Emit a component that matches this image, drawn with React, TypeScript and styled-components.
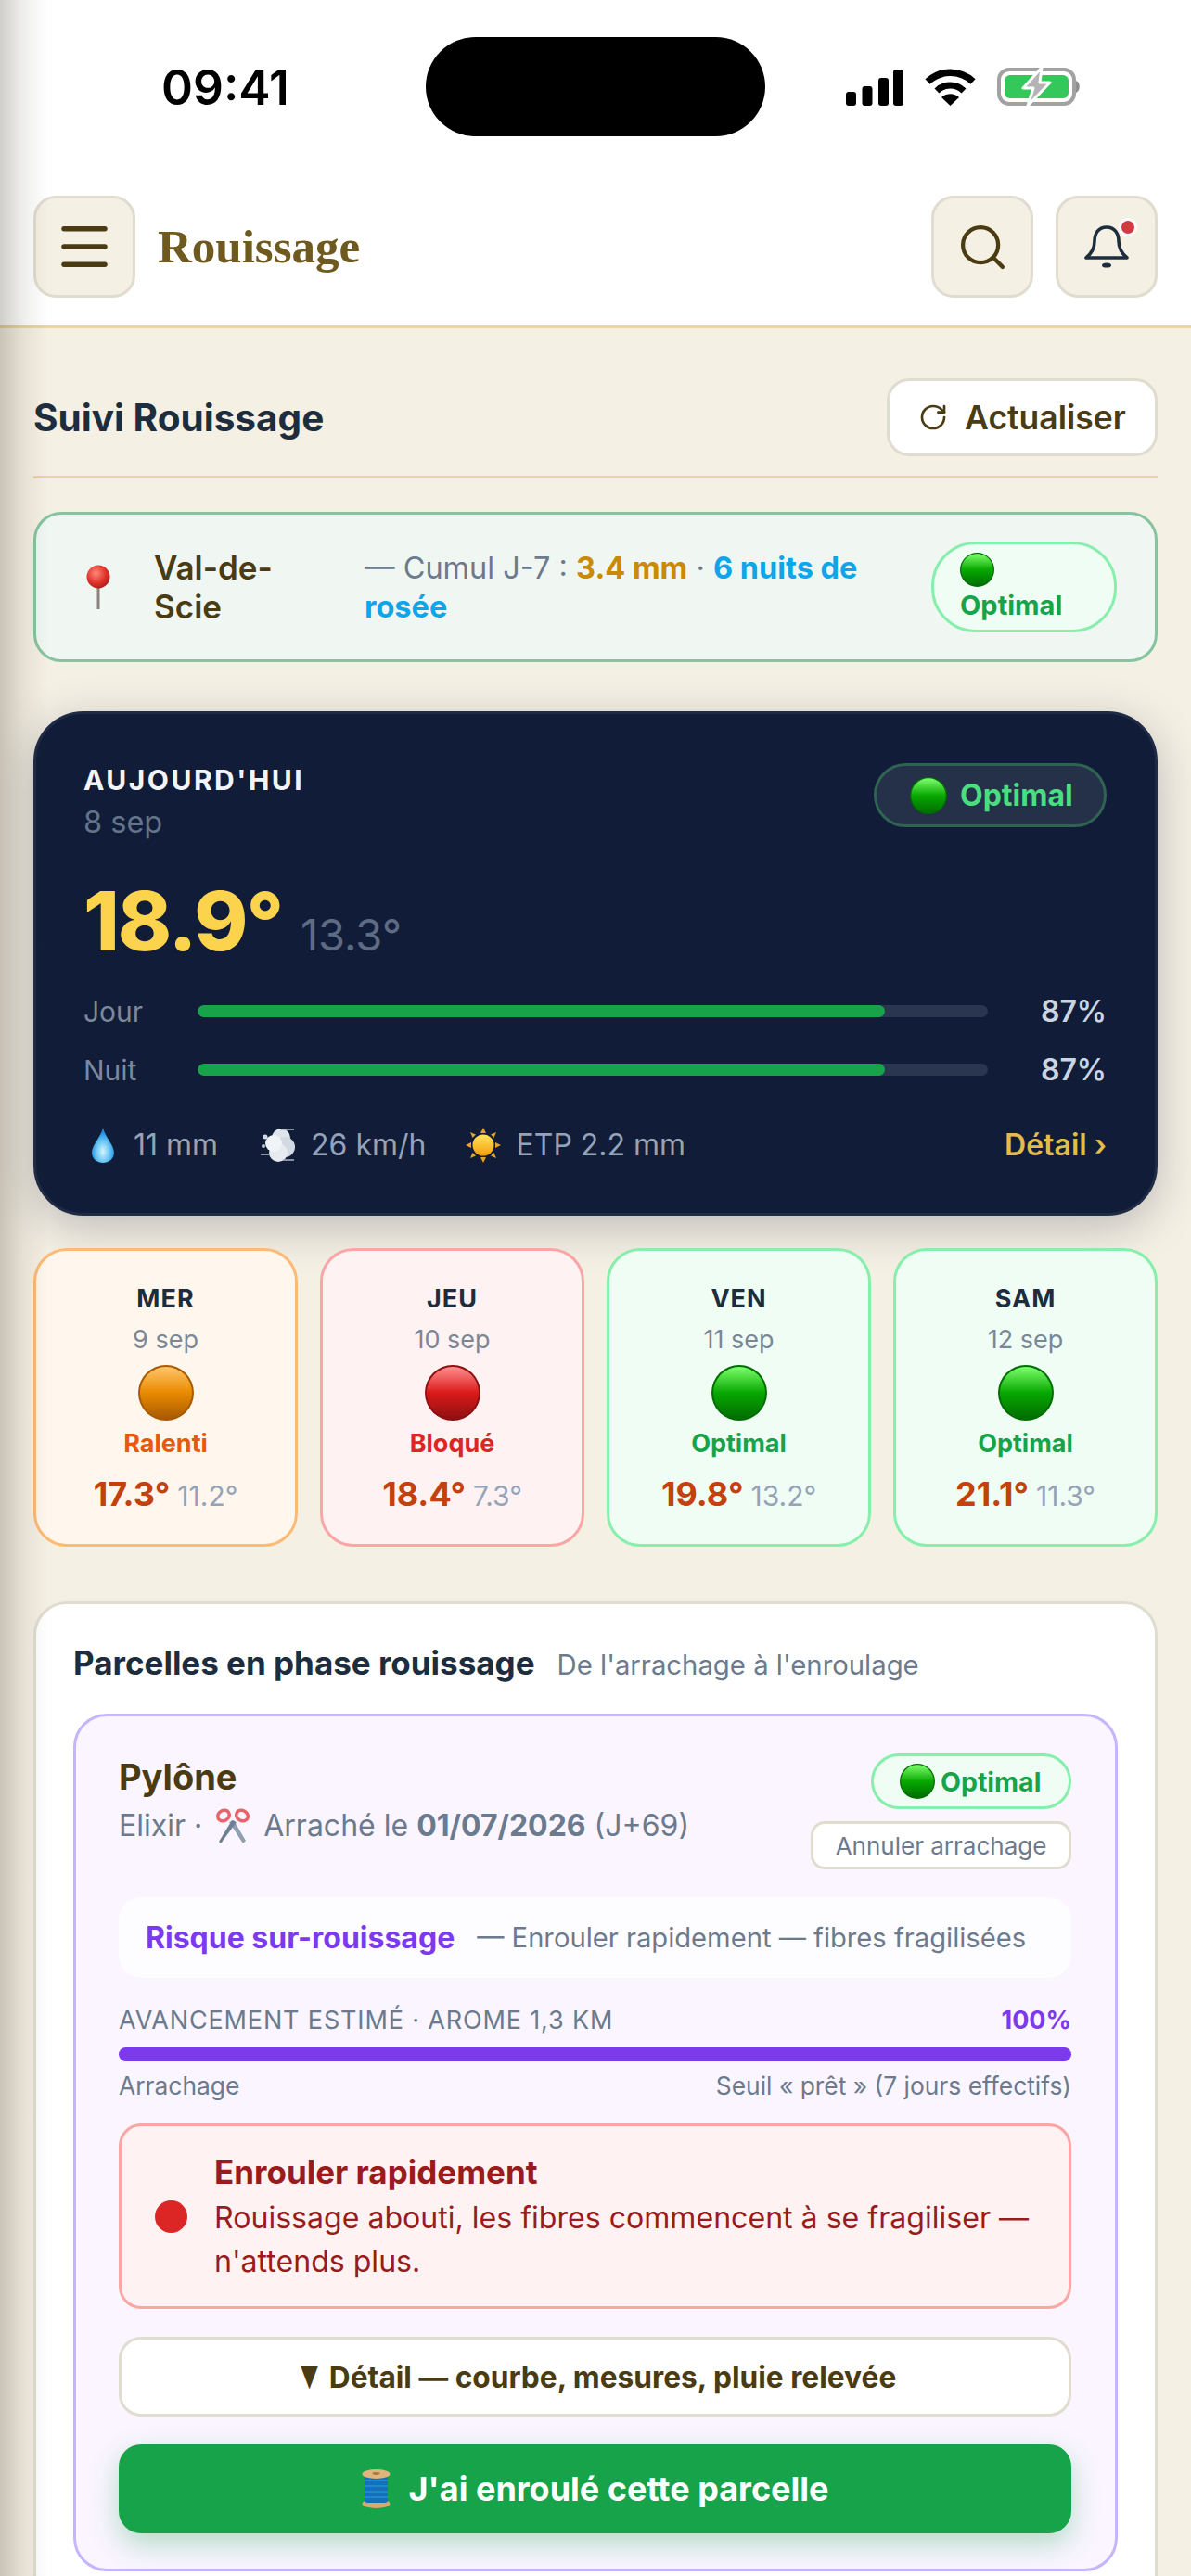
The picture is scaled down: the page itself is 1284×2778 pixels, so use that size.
import React from 'react';
import styled, { createGlobalStyle } from 'styled-components';
import { Menu, RotateCw, Search } from 'lucide-react';

const Global = createGlobalStyle`
  html, body { margin: 0; padding: 0; background: #f5f0e4; }
  * { box-sizing: border-box; }
  #root { width: 1284px; }
`;

const FONT = `Inter, "Noto Sans", sans-serif`;

const Screen = styled.div`
  position: relative;
  width: 1284px;
  height: 2778px;
  overflow: hidden;
  background: #f5f0e4;
  font-family: ${FONT};
  color: #1e2d3d;
`;

const SideShade = styled.div`
  position: absolute;
  left: 0;
  top: 0;
  bottom: 0;
  width: 52px;
  background: linear-gradient(90deg, rgba(60, 55, 40, 0.24), rgba(60, 55, 40, 0.08) 50%, rgba(60, 55, 40, 0));
  pointer-events: none;
  z-index: 5;
`;

const TopArea = styled.header`
  background: #fff;
  border-bottom: 3px solid #e8d5a0;
  height: 354px;
`;

const StatusBar = styled.div`
  height: 211px;
  position: relative;
  padding-left: 174px;
`;

const Clock = styled.div`
  font-size: 51.5px;
  font-weight: 600;
  color: #000;
  line-height: 52px;
  padding-top: 68px;
`;

const Island = styled.div`
  position: absolute;
  left: 459px;
  top: 40px;
  width: 366px;
  height: 107px;
  border-radius: 54px;
  background: #000;
`;

const StatusIcons = styled.div`
  position: absolute;
  left: 912px;
  top: 73px;
  display: flex;
  align-items: flex-end;
  gap: 23px;
`;

const NavRow = styled.div`
  display: flex;
  align-items: center;
  padding: 0 36px;
  gap: 24px;
`;

const SquareButton = styled.div`
  width: 110px;
  height: 110px;
  border-radius: 24px;
  background: #f5f0e4;
  border: 3px solid #e0dcd0;
  display: flex;
  align-items: center;
  justify-content: center;
  position: relative;
  flex: none;
`;

const Brand = styled.div`
  font-family: "Liberation Serif", serif;
  font-weight: 700;
  font-size: 51px;
  color: #6e5a1e;
  flex: 1;
`;

const Dot = styled.span`
  position: absolute;
  top: 21px;
  left: 65px;
  width: 20px;
  height: 20px;
  border-radius: 50%;
  background: #d13a40;
  border: 3px solid #fff;
`;

const Main = styled.main`
  padding: 54px 36px 0;
`;

const TitleRow = styled.div`
  display: flex;
  justify-content: space-between;
  align-items: center;
  padding-bottom: 21px;
  border-bottom: 3px solid #e8d5a0;
  margin-bottom: 36px;
`;

const PageTitle = styled.h1`
  margin: 0;
  font-size: 40.5px;
  font-weight: 700;
  color: #1e2d3d;
`;

const RefreshButton = styled.div`
  display: flex;
  align-items: center;
  gap: 18px;
  height: 84px;
  width: 292px;
  justify-content: center;
  background: #fff;
  border: 3px solid #e0dcd0;
  border-radius: 24px;
  font-size: 35.5px;
  font-weight: 600;
  color: #4a3b12;
`;

const ZoneCard = styled.section`
  display: grid;
  grid-template-columns: 75px 227px 1fr auto;
  align-items: center;
  height: 162px;
  padding: 0 41px 0 52px;
  background: #f0f7f3;
  border: 3px solid #86c49f;
  border-radius: 30px;
  margin-bottom: 53px;
`;

const ZoneName = styled.div`
  font-size: 35px;
  font-weight: 600;
  line-height: 42px;
  width: 140px;
  color: #4a3b12;
`;

const ZoneInfo = styled.div`
  font-size: 32.5px;
  line-height: 42px;
  padding-top: 2px;
  color: #6b7a8d;
  padding-right: 60px;
`;

const Strong = styled.b<{ $c: string }>`
  font-weight: 700;
  color: ${p => p.$c};
`;

const StackBadge = styled.div`
  width: 200px;
  height: 98px;
  border: 3px solid #86efac;
  border-radius: 48px;
  background: #f0fdf4;
  padding: 9px 0 0 28px;
  font-size: 29px;
  font-weight: 700;
  line-height: 40px;
  color: #16a34a;
`;

const TodayCard = styled.section`
  height: 544px;
  background: #111c38;
  border: 3px solid #1f2a45;
  border-radius: 54px;
  padding: 53px 52px 0 51px;
  box-shadow: 0 12px 48px rgba(15, 25, 50, 0.25);
  margin-bottom: 35px;
`;

const TodayHead = styled.div`
  display: flex;
  justify-content: space-between;
  align-items: flex-start;
`;

const TodayLabel = styled.div`
  font-size: 30px;
  font-weight: 700;
  letter-spacing: 2.5px;
  color: #f1f5f9;
  line-height: 36px;
`;

const TodayDate = styled.div`
  font-size: 32.5px;
  line-height: 40px;
  color: #64748b;
  margin-top: 8px;
`;

const DarkBadge = styled.div`
  display: flex;
  align-items: center;
  gap: 14px;
  height: 69px;
  width: 251px;
  padding-left: 36px;
  border-radius: 36px;
  background: #253049;
  border: 3px solid #2f6352;
  font-size: 32px;
  font-weight: 700;
  color: #4ade80;
`;

const TempRow = styled.div`
  display: flex;
  align-items: baseline;
  gap: 20px;
  margin-top: 36px;
`;

const BigTemp = styled.span`
  font-size: 88px;
  font-weight: 800;
  line-height: 100px;
  letter-spacing: -2px;
  color: #fcd34d;
`;

const LowTemp = styled.span`
  font-size: 47px;
  color: #5f6b82;
`;

const Gauges = styled.div`
  margin-top: 16px;
`;

const GaugeRow = styled.div`
  display: grid;
  grid-template-columns: 123px 1fr 128px;
  align-items: center;
  height: 63px;
`;

const GaugeLabel = styled.span`
  font-size: 30px;
  color: #7c889c;
`;

const GaugeTrack = styled.div`
  height: 13px;
  border-radius: 7px;
  background: #2a3550;
  overflow: hidden;
`;

const GaugeFill = styled.div<{ $w: number }>`
  height: 100%;
  width: ${p => p.$w}%;
  background: #16a34a;
  border-radius: 7px;
`;

const GaugeValue = styled.span`
  text-align: right;
  font-size: 32px;
  font-weight: 600;
  color: #cbd5e1;
`;

const MetaRow = styled.div`
  display: flex;
  align-items: center;
  margin-top: 30px;
  padding-left: 9px;
  font-size: 32px;
  color: #94a3b8;
`;

const MetaItem = styled.span<{ $gap: number; $after: number }>`
  display: flex;
  align-items: center;
  gap: ${p => p.$gap}px;
  margin-right: ${p => p.$after}px;
`;

const DetailLink = styled.span`
  margin-left: auto;
  color: #e2bc4a;
  font-weight: 600;
`;

const Forecast = styled.div`
  display: grid;
  grid-template-columns: repeat(4, 1fr);
  gap: 24px;
  margin-bottom: 59px;
`;

const tones = {
  orange: { bg: '#fff7ed', border: '#fdba74', text: '#ea580c' },
  red: { bg: '#fef2f2', border: '#fca5a5', text: '#dc2626' },
  green: { bg: '#f0fdf4', border: '#86efac', text: '#16a34a' },
};
type Tone = keyof typeof tones;

const DayCard = styled.div<{ $t: Tone }>`
  height: 322px;
  border-radius: 36px;
  border: 3px solid ${p => tones[p.$t].border};
  background: ${p => tones[p.$t].bg};
  display: flex;
  flex-direction: column;
  align-items: center;
  padding-top: 34px;
`;

const DayName = styled.div`
  font-size: 27px;
  font-weight: 700;
  letter-spacing: 1px;
  line-height: 36px;
  color: #1e2d3d;
`;

const DayDate = styled.div`
  font-size: 27px;
  line-height: 36px;
  color: #7a8796;
  margin-top: 8px;
  margin-bottom: 9px;
`;

const DayState = styled.div<{ $t: Tone }>`
  font-size: 27px;
  font-weight: 700;
  line-height: 36px;
  margin-top: 7px;
  color: ${p => tones[p.$t].text};
`;

const DayTemps = styled.div`
  display: flex;
  align-items: baseline;
  gap: 8px;
  margin-top: 14px;
`;

const DayHigh = styled.span`
  font-size: 36px;
  font-weight: 700;
  color: #c2410c;
`;

const DayLow = styled.span`
  font-size: 30px;
  color: #94a3b8;
`;

const Panel = styled.section`
  background: #fff;
  border: 3px solid #e0dcd0;
  border-radius: 36px;
  padding: 41px 40px;
  height: 1200px;
`;

const PanelHead = styled.div`
  display: flex;
  align-items: baseline;
  gap: 24px;
  margin-bottom: 33px;
`;

const PanelTitle = styled.h2`
  margin: 0;
  font-size: 35px;
  font-weight: 700;
  line-height: 44px;
  color: #1e2d3d;
`;

const PanelSub = styled.span`
  font-size: 29.3px;
  color: #6b7a8d;
`;

const Parcel = styled.article`
  height: 925px;
  background: #faf5ff;
  border: 3px solid #c4b5fd;
  border-radius: 36px;
  padding: 40px 47px 0 46px;
`;

const ParcelHead = styled.div`
  display: flex;
  justify-content: space-between;
  align-items: flex-start;
`;

const ParcelName = styled.div`
  font-size: 38px;
  font-weight: 700;
  line-height: 46px;
  margin-top: 2px;
  color: #4a3b12;
`;

const ParcelSub = styled.div`
  display: flex;
  align-items: center;
  gap: 14px;
  margin-top: 8px;
  font-size: 32px;
  line-height: 44px;
  color: #6b7a8d;
  b { font-weight: 700; }
`;

const ParcelActions = styled.div`
  display: flex;
  flex-direction: column;
  align-items: flex-end;
  gap: 13px;
`;

const SmallBadge = styled.div`
  display: flex;
  align-items: center;
  gap: 6px;
  width: 216px;
  height: 60px;
  padding-left: 28px;
  background: #f0fdf4;
  border: 3px solid #86efac;
  border-radius: 30px;
  font-size: 28.5px;
  font-weight: 700;
  color: #16a34a;
`;

const GhostButton = styled.div`
  display: flex;
  align-items: center;
  justify-content: center;
  width: 281px;
  height: 52px;
  background: #fff;
  border: 3px solid #e0dcd0;
  border-radius: 15px;
  font-size: 26px;
  color: #6b7a8d;
`;

const RiskStrip = styled.div`
  display: flex;
  align-items: center;
  gap: 24px;
  height: 87px;
  margin-top: 30px;
  padding-left: 29px;
  background: rgba(255, 255, 255, 0.65);
  border-radius: 24px;
  font-size: 29.2px;
  color: #6b7a8d;
`;

const RiskName = styled.b`
  font-size: 32px;
  font-weight: 700;
  color: #7c3aed;
`;

const ProgressHead = styled.div`
  display: flex;
  justify-content: space-between;
  margin-top: 29px;
  font-size: 27px;
  line-height: 34px;
  letter-spacing: 0.85px;
  color: #6b7a8d;
`;

const ProgressPct = styled.b`
  font-weight: 700;
  letter-spacing: 0;
  color: #7c3aed;
`;

const ProgressBar = styled.div`
  height: 15px;
  margin-top: 12px;
  border-radius: 8px;
  background: #7c3aed;
`;

const ProgressFoot = styled.div`
  display: flex;
  justify-content: space-between;
  margin-top: 9px;
  font-size: 26.4px;
  line-height: 34px;
  color: #6b7a8d;
`;

const Alert = styled.div`
  display: flex;
  align-items: center;
  gap: 29px;
  height: 200px;
  margin-top: 24px;
  padding: 0 28px 0 36px;
  background: #fef2f2;
  border: 3px solid #fca5a5;
  border-radius: 24px;
`;

const AlertDot = styled.span`
  flex: none;
  width: 35px;
  height: 35px;
  border-radius: 50%;
  background: #dc2626;
`;

const AlertTitle = styled.div`
  font-size: 35px;
  font-weight: 700;
  line-height: 46px;
  color: #991b1b;
`;

const AlertBody = styled.div`
  font-size: 32.1px;
  line-height: 47px;
  margin-top: 3px;
  color: #991b1b;
`;

const DetailButton = styled.div`
  display: flex;
  align-items: center;
  justify-content: center;
  gap: 5px;
  height: 86px;
  margin-top: 30px;
  background: #fff;
  border: 3px solid #e0dcd0;
  border-radius: 24px;
  font-size: 31.7px;
  font-weight: 700;
  color: #4a3b12;
`;

const Caret = styled.span`
  display: inline-block;
  transform: scaleX(0.62);
`;

const PrimaryButton = styled.div`
  display: flex;
  align-items: center;
  justify-content: center;
  gap: 20px;
  height: 96px;
  margin-top: 30px;
  background: #16a34a;
  border-radius: 24px;
  font-size: 36px;
  font-weight: 700;
  color: #fff;
  box-shadow: 0 12px 30px rgba(22, 163, 74, 0.3);
`;

const Ball = ({ size, hue = 'green' }: { size: number; hue?: 'green' | 'orange' | 'red' }) => {
  const c = {
    green: ['#7dff6e', '#07a800', '#006d00'],
    orange: ['#ffc56a', '#e98a00', '#a85a00'],
    red: ['#ff8f8f', '#dc1a1a', '#8e1010'],
  }[hue];
  const id = `ball-${hue}-${size}`;
  return (
    <svg width={size} height={size} viewBox="0 0 60 60" style={{ flex: 'none', display: 'block' }}>
      <defs>
        <linearGradient id={id} x1="0" y1="0" x2="0" y2="1">
          <stop offset="0" stopColor={c[0]} />
          <stop offset="0.5" stopColor={c[1]} />
          <stop offset="1" stopColor={c[2]} />
        </linearGradient>
      </defs>
      <circle cx="30" cy="30" r="30" fill={c[2]} />
      <circle cx="30" cy="30" r="28" fill={`url(#${id})`} />
    </svg>
  );
};

const Signal = () => (
  <svg width="62" height="39" viewBox="0 0 62 39" style={{ display: 'block' }}>
    <rect x="0" y="24" width="11" height="15" rx="3" fill="#000" />
    <rect x="17.5" y="18" width="11" height="21" rx="3" fill="#000" />
    <rect x="35" y="9" width="11" height="30" rx="3" fill="#000" />
    <rect x="51" y="0" width="11" height="39" rx="3" fill="#000" />
  </svg>
);

const Wifi = () => (
  <svg width="55" height="40" viewBox="0 0 55 40" style={{ display: 'block' }}>
    <path d="M3 14 C17 1 38 1 52 14" stroke="#000" strokeWidth="7.5" fill="none" />
    <path d="M13 24 C21 16 34 16 42 24" stroke="#000" strokeWidth="7" fill="none" />
    <path d="M27.5 40 L18 31 C23 26 32 26 37 31 Z" fill="#000" />
  </svg>
);

const Battery = () => (
  <svg width="90" height="41" viewBox="0 0 90 41" style={{ display: 'block' }}>
    <rect x="2" y="2" width="81" height="37" rx="11" fill="none" stroke="#a2a2a2" strokeWidth="4" />
    <rect x="8" y="8" width="69" height="25" rx="6" fill="#34c759" />
    <path d="M85 14 C90 16 90 25 85 27 Z" fill="#8f8f8f" />
    <path d="M48 0 L28 22 H39 L33 41 L57 16 H46 Z" fill="#b4b4b4" stroke="#fff" strokeWidth="3" strokeLinejoin="round" />
  </svg>
);

const BellIcon = () => (
  <svg width="48" height="46" viewBox="0 0 48 46">
    <path
      d="M24 2 C15 2 11 9 11 17 C11 25 8 30 2 35 H46 C40 30 37 25 37 17 C37 9 33 2 24 2 Z"
      fill="none"
      stroke="#1e2d3d"
      strokeWidth="3.6"
      strokeLinejoin="round"
    />
    <ellipse cx="24" cy="43" rx="5" ry="2.6" fill="#1e2d3d" />
  </svg>
);

const Pin = () => (
  <svg width="30" height="48" viewBox="0 0 30 48">
    <defs>
      <radialGradient id="pin" cx="0.4" cy="0.35" r="0.7">
        <stop offset="0" stopColor="#ff8a7a" />
        <stop offset="0.6" stopColor="#e0322b" />
        <stop offset="1" stopColor="#a81c18" />
      </radialGradient>
    </defs>
    <rect x="13.5" y="20" width="3" height="28" fill="#8a8280" />
    <circle cx="15" cy="13" r="12.5" fill="url(#pin)" />
  </svg>
);

const Drop = () => (
  <svg width="24" height="38" viewBox="0 0 24 38" style={{ flex: 'none' }}>
    <defs>
      <radialGradient id="drop" cx="0.5" cy="0.68" r="0.55">
        <stop offset="0" stopColor="#d6f4ff" />
        <stop offset="0.6" stopColor="#5fc2f2" />
        <stop offset="1" stopColor="#1a8be0" />
      </radialGradient>
    </defs>
    <path d="M12 0 C14 10 24 19 24 27 C24 34 18 38 12 38 C6 38 0 34 0 27 C0 19 10 10 12 0 Z" fill="url(#drop)" />
  </svg>
);

const Wind = () => (
  <svg width="38" height="38" viewBox="0 0 38 38" style={{ flex: 'none' }}>
    <circle cx="22" cy="11" r="10" fill="#dfe5ec" />
    <circle cx="26" cy="21" r="11" fill="#d2d9e2" />
    <circle cx="19" cy="27" r="10" fill="#e6ebf0" />
    <circle cx="14" cy="17" r="9" fill="#f1f4f7" />
    <path d="M22 2 H36 M24 35 H36 M0 29 H10" stroke="#aeb8c4" strokeWidth="1.6" />
    <circle cx="5" cy="10" r="2.5" fill="#d6dce4" />
    <circle cx="3" cy="20" r="2" fill="#c0c9d4" />
  </svg>
);

const Sun = () => (
  <svg width="38" height="38" viewBox="0 0 38 38" style={{ flex: 'none' }}>
    <defs>
      <linearGradient id="sun" x1="0" y1="0" x2="0" y2="1">
        <stop offset="0" stopColor="#ffe45e" />
        <stop offset="1" stopColor="#f59e0b" />
      </linearGradient>
    </defs>
    <g fill="#e0a52a">
      <path d="M19 0 L22 6 H16 Z" />
      <path d="M19 38 L22 32 H16 Z" />
      <path d="M0 19 L6 16 V22 Z" />
      <path d="M38 19 L32 16 V22 Z" />
      <path d="M5 5 L11 7.5 L7.5 11 Z" />
      <path d="M33 5 L30.5 11 L27 7.5 Z" />
      <path d="M5 33 L7.5 27 L11 30.5 Z" />
      <path d="M33 33 L27 30.5 L30.5 27 Z" />
    </g>
    <circle cx="19" cy="19" r="11.5" fill="url(#sun)" />
  </svg>
);

const Scissors = () => (
  <svg width="38" height="39" viewBox="0 0 38 39" style={{ flex: 'none' }}>
    <path d="M15 15 L30 38 L33 35 L20 13 Z" fill="#8fa0b2" />
    <path d="M23 15 L6 38 L4 36 L18 13 Z" fill="#6f8093" />
    <ellipse cx="9" cy="8" rx="6.5" ry="5.5" transform="rotate(-30 9 8)" fill="none" stroke="#e8646a" strokeWidth="3.5" />
    <ellipse cx="29" cy="8" rx="6.5" ry="5.5" transform="rotate(30 29 8)" fill="none" stroke="#e8646a" strokeWidth="3.5" />
  </svg>
);

const Spool = () => (
  <svg width="31" height="42" viewBox="0 0 31 42" style={{ flex: 'none' }}>
    <ellipse cx="15.5" cy="37" rx="15" ry="5" fill="#d9a86c" />
    <rect x="3" y="6" width="25" height="30" rx="3" fill="#1272b8" />
    <path d="M3 12 H28 M3 18 H28 M3 24 H28 M3 30 H28" stroke="#2a8fd4" strokeWidth="1.6" />
    <ellipse cx="15.5" cy="5" rx="15" ry="5" fill="#e0b47a" />
    <ellipse cx="15.5" cy="4.5" rx="4" ry="1.4" fill="#a87a45" />
  </svg>
);

const days: { name: string; date: string; tone: Tone; hue: 'green' | 'orange' | 'red'; state: string; hi: string; lo: string }[] = [
  { name: 'MER', date: '9 sep', tone: 'orange', hue: 'orange', state: 'Ralenti', hi: '17.3°', lo: '11.2°' },
  { name: 'JEU', date: '10 sep', tone: 'red', hue: 'red', state: 'Bloqué', hi: '18.4°', lo: '7.3°' },
  { name: 'VEN', date: '11 sep', tone: 'green', hue: 'green', state: 'Optimal', hi: '19.8°', lo: '13.2°' },
  { name: 'SAM', date: '12 sep', tone: 'green', hue: 'green', state: 'Optimal', hi: '21.1°', lo: '11.3°' },
];

export default function App() {
  return (
    <Screen>
      <Global />
      <SideShade />
      <TopArea>
        <StatusBar>
          <Clock>09:41</Clock>
          <Island />
          <StatusIcons>
            <Signal />
            <Wifi />
            <Battery />
          </StatusIcons>
        </StatusBar>
        <NavRow>
          <SquareButton>
            <Menu size={66} color="#4a3b12" strokeWidth={2} />
          </SquareButton>
          <Brand>Rouissage</Brand>
          <SquareButton>
            <Search size={57} color="#4a3b12" strokeWidth={1.8} />
          </SquareButton>
          <SquareButton>
            <BellIcon />
            <Dot />
          </SquareButton>
        </NavRow>
      </TopArea>
      <Main>
        <TitleRow>
          <PageTitle>Suivi Rouissage</PageTitle>
          <RefreshButton>
            <RotateCw size={32} color="#4a3b12" strokeWidth={2} />
            Actualiser
          </RefreshButton>
        </TitleRow>
        <ZoneCard>
          <Pin />
          <ZoneName>Val-de-Scie</ZoneName>
          <ZoneInfo>
            — Cumul J-7 : <Strong $c="#ca8a04">3.4 mm</Strong> · <Strong $c="#0ea5e9">6 nuits de rosée</Strong>
          </ZoneInfo>
          <StackBadge>
            <Ball size={37} />
            Optimal
          </StackBadge>
        </ZoneCard>
        <TodayCard>
          <TodayHead>
            <div>
              <TodayLabel>AUJOURD'HUI</TodayLabel>
              <TodayDate>8 sep</TodayDate>
            </div>
            <DarkBadge>
              <Ball size={40} />
              Optimal
            </DarkBadge>
          </TodayHead>
          <TempRow>
            <BigTemp>18.9°</BigTemp>
            <LowTemp>13.3°</LowTemp>
          </TempRow>
          <Gauges>
            <GaugeRow>
              <GaugeLabel>Jour</GaugeLabel>
              <GaugeTrack>
                <GaugeFill $w={87} />
              </GaugeTrack>
              <GaugeValue>87%</GaugeValue>
            </GaugeRow>
            <GaugeRow>
              <GaugeLabel>Nuit</GaugeLabel>
              <GaugeTrack>
                <GaugeFill $w={87} />
              </GaugeTrack>
              <GaugeValue>87%</GaugeValue>
            </GaugeRow>
          </Gauges>
          <MetaRow>
            <MetaItem $gap={21} $after={46}><Drop /> 11 mm</MetaItem>
            <MetaItem $gap={16} $after={42}><Wind /> 26 km/h</MetaItem>
            <MetaItem $gap={17} $after={46}><Sun /> ETP 2.2 mm</MetaItem>
            <DetailLink>Détail ›</DetailLink>
          </MetaRow>
        </TodayCard>
        <Forecast>
          {days.map(d => (
            <DayCard key={d.name} $t={d.tone}>
              <DayName>{d.name}</DayName>
              <DayDate>{d.date}</DayDate>
              <Ball size={60} hue={d.hue} />
              <DayState $t={d.tone}>{d.state}</DayState>
              <DayTemps>
                <DayHigh>{d.hi}</DayHigh>
                <DayLow>{d.lo}</DayLow>
              </DayTemps>
            </DayCard>
          ))}
        </Forecast>
        <Panel>
          <PanelHead>
            <PanelTitle>Parcelles en phase rouissage</PanelTitle>
            <PanelSub>De l'arrachage à l'enroulage</PanelSub>
          </PanelHead>
          <Parcel>
            <ParcelHead>
              <div>
                <ParcelName>Pylône</ParcelName>
                <ParcelSub>
                  Elixir · <Scissors /> <span>Arraché le <b>01/07/2026</b> (J+69)</span>
                </ParcelSub>
              </div>
              <ParcelActions>
                <SmallBadge>
                  <Ball size={38} />
                  Optimal
                </SmallBadge>
                <GhostButton>Annuler arrachage</GhostButton>
              </ParcelActions>
            </ParcelHead>
            <RiskStrip>
              <RiskName>Risque sur-rouissage</RiskName>
              <span>— Enrouler rapidement — fibres fragilisées</span>
            </RiskStrip>
            <ProgressHead>
              <span>AVANCEMENT ESTIMÉ · AROME 1,3 KM</span>
              <ProgressPct>100%</ProgressPct>
            </ProgressHead>
            <ProgressBar />
            <ProgressFoot>
              <span>Arrachage</span>
              <span>Seuil « prêt » (7 jours effectifs)</span>
            </ProgressFoot>
            <Alert>
              <AlertDot />
              <div>
                <AlertTitle>Enrouler rapidement</AlertTitle>
                <AlertBody>Rouissage abouti, les fibres commencent à se fragiliser — n'attends plus.</AlertBody>
              </div>
            </Alert>
            <DetailButton>
              <Caret>▼</Caret>
              <span>Détail — courbe, mesures, pluie relevée</span>
            </DetailButton>
            <PrimaryButton>
              <Spool />
              J'ai enroulé cette parcelle
            </PrimaryButton>
          </Parcel>
        </Panel>
      </Main>
    </Screen>
  );
}
